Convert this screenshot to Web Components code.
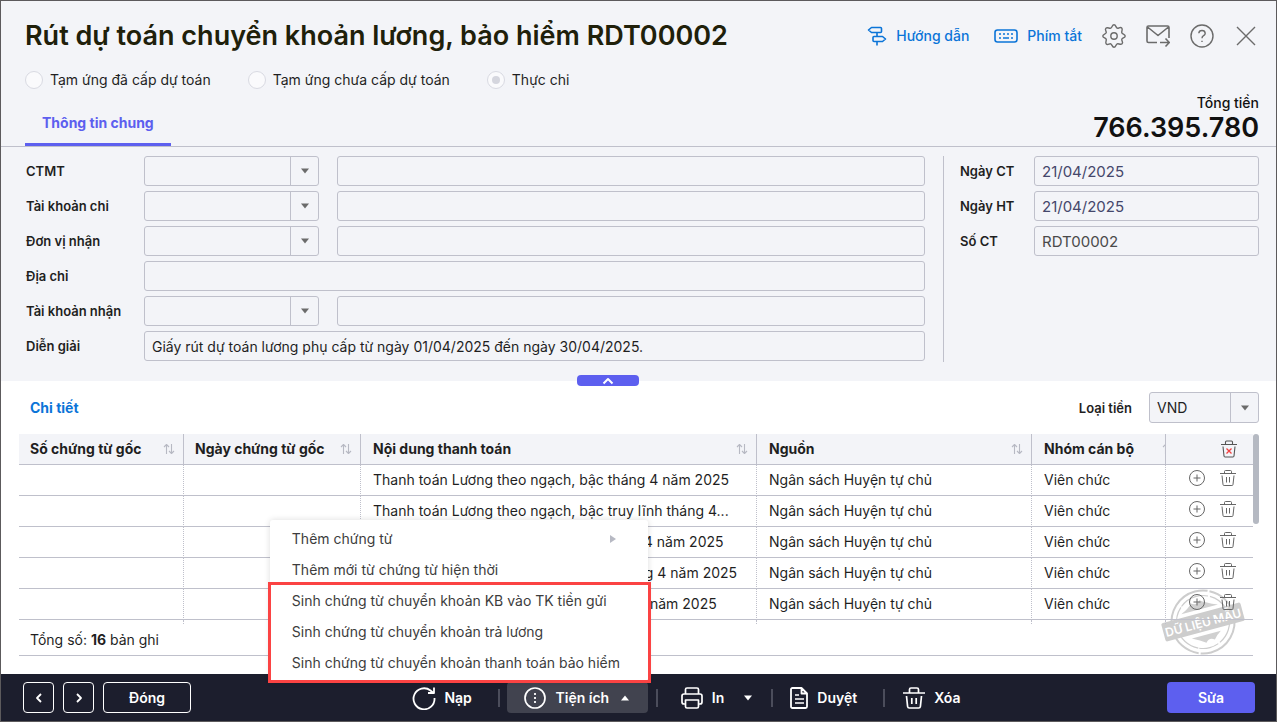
<!DOCTYPE html>
<html lang="vi">
<head>
<meta charset="utf-8">
<meta name="viewport" content="width=device-width, initial-scale=1">
<title>Rút dự toán chuyển khoản lương, bảo hiểm</title>
<style>
  :root {
    --panel: #f3f4f8;
    --line: #bfc0cb;
    --ink: #1f1f1f;
    --primary: #5d5fef;
    --link: #0b74d8;
    --bar: #1c1e2d;
  }
  body { margin: 0; font-family: Inter, "Noto Sans", sans-serif; font-size: 14px; line-height: 20px; color: var(--ink); }
</style>
</head>
<body>
<voucher-page></voucher-page>

<script>
/* Registers an element whose shadow root is cloned from a template. */
const define = (name, css, html) => {
  customElements.define(name, class extends HTMLElement {
    connectedCallback() {
      if (this.shadowRoot) return;
      const tpl = document.createElement('template');
      tpl.innerHTML = '<style>*{box-sizing:border-box}' + css + '</style>' + (typeof html === 'function' ? html(this) : html);
      this.attachShadow({ mode: 'open' }).append(tpl.content.cloneNode(true));
    }
  });
};

const ICONS = {
  signpost: ['0 0 20 20', '<path d="M4.500 1.500H13.500Q14.500 1.500 14.500 2.500V5.500Q14.500 6.500 13.500 6.500H4.500L1.500 4Z M7 10.500H15.500L18.500 13L15.500 15.500H7Q6 15.500 6 14.500V11.500Q6 10.500 7 10.500Z M10 6.500V10.500 M10 15.500V19.500" stroke-width="1.600"/>'],
  keyboard: ['0 0 24 14', '<rect x="1" y="1" width="22" height="12" rx="2.500" stroke-width="1.600"/><path d="M5 5H7M9 5H11M13 5H15M17 5H19M5 9H7M9 9H15M17 9H19" stroke-width="1.600"/>'],
  gear: ['0 0 24 24', '<circle cx="12" cy="12" r="3.200"/><path d="M12 .8C14 .8 13.800 3.600 15.200 4.200S18.200 2.300 19.700 3.900S19.200 7.300 19.800 8.800S23.200 10 23.200 12S20.400 13.800 19.800 15.200S21.700 18.200 20.100 19.700S16.700 19.200 15.200 19.800S14 23.200 12 23.200S10.200 20.400 8.800 19.800S5.800 21.700 4.300 20.100S4.800 16.700 4.200 15.200S.8 14 .8 12S3.600 10.200 4.200 8.800S2.300 5.800 3.900 4.300S7.300 4.800 8.800 4.200S10 .8 12 .8Z"/>'],
  mail: ['0 0 24 24', '<path d="M23 14V3.500Q23 2 21.500 2H2.500Q1 2 1 3.500V17Q1 18.500 2.500 18.500H11M1.500 3L12 11.500L22.500 3M14 18.500H23M19.500 14.500L23.300 18.500L19.500 22.500" stroke-width="1.600"/>'],
  help: ['0 0 24 24', '<circle cx="12" cy="12" r="11"/><path d="M8.800 9.300Q9 6.500 12 6.500T15.200 9.300Q15.200 10.800 13.600 11.700T12 14.300M12 16.800V18"/>'],
  close: ['0 0 20 20', '<path d="M1 1L19 19M19 1L1 19"/>'],
  caret: ['0 0 10 6', '<path d="M1 0.500H9L5 5.500Z" fill="currentColor" stroke="none"/>'],
  caretUp: ['0 0 10 6', '<path d="M1 5.500H9L5 0.500Z" fill="currentColor" stroke="none"/>'],
  caretRight: ['0 0 6 10', '<path d="M0 1V9L6 5Z" fill="currentColor" stroke="none"/>'],
  up: ['0 0 12 8', '<path d="M1.500 6.500L6 2L10.500 6.500" stroke-width="2"/>'],
  sort: ['0 0 12 12', '<path d="M3.500 11V1.500M1 4L3.500 1.500L6 4M8.500 1V10.500M6 8L8.500 10.500L11 8" stroke-width="1.100"/>'],
  plus: ['0 0 16 16', '<circle cx="8" cy="8" r="7.500" stroke-width="1"/><path d="M8 4.500V11.500M4.500 8H11.500" stroke-width="1"/>'],
  trash: ['0 0 16 16', '<path d="M0 3.500H16M4.500 3.500V1.500Q4.500 .5 5.500 .5H10.500Q11.500 .5 11.500 1.500V3.500M2 5.500L3 14.500Q3.100 15.500 4.100 15.500H11.900Q12.900 15.500 13 14.500L14 5.500M6.500 7V12.500M9.500 7V12.500" stroke-width="1"/>'],
  trashAll: ['0 0 16 18', '<path d="M0 4.500H16M4.500 4.500V2Q4.500 1 5.500 1H10.500Q11.500 1 11.500 2V4.500M2 6.500L3 16Q3.100 17 4.100 17H11.900Q12.900 17 13 16L14 6.500" stroke-width="1.100"/><path d="M5.500 8.500L10.500 13.500M10.500 8.500L5.500 13.500" stroke="#f04040" stroke-width="1.300"/>'],
  trashBig: ['0 0 22 22', '<path d="M0 6H22M6.500 6V2.500Q6.500 1 8 1H14Q15.500 1 15.500 2.500V6M3.500 9L4.600 19.500Q4.800 21 6.300 21H15.700Q17.200 21 17.400 19.500L18.500 9M8.800 11V17M13.200 11V17" stroke-width="1.700"/>'],
  reload: ['0 0 24 24', '<path d="M22.500 12A10.500 10.500 0 1 1 18.500 4.500L21.500 7M22 1.500V7H16" stroke-width="1.800"/>'],
  more: ['0 0 22 22', '<circle cx="11" cy="11" r="10" stroke-width="1.700"/><path d="M11 6V8M11 10V12M11 14V16" stroke-width="1.800"/>'],
  print: ['0 0 22 22', '<path d="M4.500 7V2.500Q4.500 1 6 1H16Q17.500 1 17.500 2.500V7M4.500 17H3Q1 17 1 15V9Q1 7 3 7H19Q21 7 21 9V15Q21 17 19 17H17.500M4.500 13H17.500V19.500Q17.500 21 16 21H6Q4.500 21 4.500 19.500Z" stroke-width="1.700"/>'],
  doc: ['0 0 18 22', '<path d="M2.500 1H11.500L17 6.500V19.500Q17 21 15.500 21H2.500Q1 21 1 19.500V2.500Q1 1 2.500 1ZM11.500 1V6.500H17" stroke-width="1.800"/><path d="M5 8H9M5 12H14M5 16H14" stroke-width="1.700"/>'],
  left: ['0 0 16 16', '<path d="M10 4L6 8L10 12" stroke-width="1.800"/>'],
  right: ['0 0 16 16', '<path d="M6 4L10 8L6 12" stroke-width="1.800"/>']
};

/* <ui-icon name>: drawn at the size of its own view box. */
define('ui-icon', ':host{display:inline-flex;flex:none}svg{display:block;fill:none;stroke:currentColor;stroke-width:1.400;stroke-linecap:butt;stroke-linejoin:round}',
  el => {
    const [box, body] = ICONS[el.getAttribute('name')];
    const [, , w, h] = box.split(' ');
    return `<svg viewBox="${box}" width="${w}" height="${h}" aria-hidden="true">${body}</svg>`;
  });

/* Box with a native select and a divided arrow on the right. */
const COMBO_CSS = `
  .combo{display:grid;grid-template-columns:1fr 28px;height:30px;border:1px solid var(--line);border-radius:3px;background:var(--panel)}
  .combo select{grid-area:1/1/2/3;min-width:0;appearance:none;border:0;background:none;padding:0 7px;font:inherit;color:var(--ink);outline:none}
  .combo span{grid-area:1/2;display:flex;align-items:center;justify-content:center;border-left:1px solid var(--line);color:#6b6b6b;pointer-events:none}`;
const INPUT_CSS = `
  input{height:30px;width:100%;min-width:0;border:1px solid var(--line);border-radius:3px;background:transparent;padding:0 7px;font:inherit;color:var(--ink);outline:none}`;

/* <form-row label combo value>: one line of the left form. */
define('form-row', `
  :host{display:grid;grid-template-columns:101px 175px 1fr;column-gap:18px;align-items:center}
  label{font-size:13px;font-weight:600;padding-left:1px;white-space:nowrap}
  .wide{grid-column:2/4}` + COMBO_CSS + INPUT_CSS,
  el => {
    const label = el.getAttribute('label');
    return `<label for="c">${label}</label>` + (el.hasAttribute('combo')
      ? `<div class="combo"><select id="c"><option></option></select><span><ui-icon name="caret"></ui-icon></span></div><input type="text" aria-label="${label} - tên">`
      : `<input id="c" class="wide" type="text" value="${el.getAttribute('value') || ''}">`);
  });

/* <side-row label value>: one line of the right form. */
define('side-row', `
  :host{display:grid;grid-template-columns:74px 1fr;align-items:center}
  label{font-size:13px;font-weight:600}` + INPUT_CSS + `
  input{font-size:15px}
  :host([tone=date]) input{color:#45476b}:host([tone=code]) input{color:#4a4a4a}`,
  el => `<label for="c">${el.getAttribute('label')}</label><input id="c" type="text" value="${el.getAttribute('value')}">`);

define('currency-picker', `
  :host{display:flex;align-items:center;gap:17px}
  label{font-size:13px;font-weight:600}` + COMBO_CSS + `
  .combo{width:110px;height:31px}`,
  `<label for="c">Loại tiền</label><div class="combo"><select id="c"><option>VND</option></select><span><ui-icon name="caret"></ui-icon></span></div>`);

define('voucher-kind', `
  :host{display:flex;gap:37px}
  label{display:flex;align-items:center;gap:7px}
  input{appearance:none;margin:0;width:18px;height:18px;border:1px solid #d9dae2;border-radius:50%;background:#fafafc;display:grid;place-items:center}
  input:checked::after{content:"";width:8px;height:8px;border-radius:50%;background:#d5d6de}`,
  `<label><input type="radio" name="k">Tạm ứng đã cấp dự toán</label>
   <label><input type="radio" name="k">Tạm ứng chưa cấp dự toán</label>
   <label><input type="radio" name="k" checked>Thực chi</label>`);

define('voucher-header', `
  :host{display:block;border-bottom:1px solid var(--line);padding:0 17px 0 24px}
  .top{display:flex;justify-content:space-between;align-items:center;height:69px;padding-top:1px}
  h1{margin:0;font-size:27px;line-height:32px;font-weight:600;color:#20200a}
  .tools{display:flex;align-items:center;gap:20px;margin-right:3px}
  a{display:flex;align-items:center;gap:9px;color:var(--link);font-weight:500;text-decoration:none}
  a:first-child{margin-right:5px}
  button{border:0;background:none;padding:0;display:flex;color:#6b6b6b}
  .tools button:last-child{margin-left:2px}
  .bottom{display:flex;justify-content:space-between;height:76px}
  .left{display:flex;flex-direction:column;justify-content:space-between;align-items:flex-start}
  .tab{border:0;border-bottom:3px solid var(--primary);background:none;padding:0 17px 10px;font:inherit;font-weight:700;color:var(--primary);line-height:20px}
  .total{text-align:right;padding-top:23px;line-height:20px;font-weight:500;color:#111}
  .total b{display:block;font-size:27px;line-height:30px;font-weight:600}`,
  `<div class="top"><h1>Rút dự toán chuyển khoản lương, bảo hiểm RDT00002</h1>
     <nav class="tools">
       <a href="#guide"><ui-icon name="signpost"></ui-icon>Hướng dẫn</a>
       <a href="#keys"><ui-icon name="keyboard"></ui-icon>Phím tắt</a>
       <button aria-label="Thiết lập"><ui-icon name="gear"></ui-icon></button>
       <button aria-label="Gửi"><ui-icon name="mail"></ui-icon></button>
       <button aria-label="Trợ giúp"><ui-icon name="help"></ui-icon></button>
       <button aria-label="Đóng cửa sổ"><ui-icon name="close"></ui-icon></button>
     </nav></div>
   <div class="bottom"><div class="left"><voucher-kind></voucher-kind><button class="tab">Thông tin chung</button></div>
     <div class="total">Tổng tiền<b>766.395.780</b></div></div>`);

define('voucher-form', `
  :host{display:grid;grid-template-columns:1fr 316px;column-gap:18px;padding:9px 17px 19px 24px;position:relative}
  .main,.side{display:flex;flex-direction:column;gap:5px}
  .main{padding-bottom:1px}
  .side{border-left:1px solid var(--line);padding-left:16px}
  .fold{position:absolute;left:calc(50% - 62px);bottom:-5px;width:62px;height:11px;border:0;border-radius:4px;padding:0;background:var(--primary);color:#fff;display:flex;align-items:center;justify-content:center}`,
  `<div class="main">
     <form-row label="CTMT" combo></form-row>
     <form-row label="Tài khoản chi" combo></form-row>
     <form-row label="Đơn vị nhận" combo></form-row>
     <form-row label="Địa chỉ"></form-row>
     <form-row label="Tài khoản nhận" combo></form-row>
     <form-row label="Diễn giải" value="Giấy rút dự toán lương phụ cấp từ ngày 01/04/2025 đến ngày 30/04/2025."></form-row>
   </div>
   <div class="side">
     <side-row label="Ngày CT" value="21/04/2025" tone="date"></side-row>
     <side-row label="Ngày HT" value="21/04/2025" tone="date"></side-row>
     <side-row label="Số CT" value="RDT00002" tone="code"></side-row>
   </div>
   <button class="fold" aria-label="Thu gọn"><ui-icon name="up"></ui-icon></button>`);

const ROWS = [
  'Thanh toán Lương theo ngạch, bậc tháng 4 năm 2025',
  'Thanh toán Lương theo ngạch, bậc truy lĩnh tháng 4...',
  'Thanh toán Phụ cấp trách nhiệm - tháng 4 năm 2025',
  'Thanh toán Phụ cấp thâm niên nghề tháng 4 năm 2025',
  'Thanh toán Phụ cấp công vụ bậc tháng 4 năm 2025'
];

define('detail-table', `
  :host{display:block;position:relative}
  table{position:relative;width:100%;table-layout:fixed;border-collapse:separate;border-spacing:0;text-align:left}
  th,td{height:31px;padding:0 12px;border-bottom:1px solid var(--line);white-space:nowrap;overflow:hidden;text-overflow:ellipsis}
  th{background:var(--panel);font-weight:700;padding-right:8px}
  th:first-child,td:first-child{padding-left:11px}
  th:nth-child(2){padding-left:11px}
  th:not(:last-child){border-right:1px solid var(--line)}
  td:not(:last-child){border-right:1px dotted var(--line)}
  tfoot td{height:4px;border-bottom:0}
  th div{display:flex;justify-content:space-between;align-items:center}
  th ui-icon{color:#b7b9c3}
  .cut{text-overflow:clip}
  .clip{width:130px}
  .acts{display:flex;gap:15px;align-items:center;padding:0 0 4px 11px}
  .all{padding-left:43px}
  button{border:0;background:none;padding:0;display:flex;color:#666}
  th button ui-icon{color:#555}
  .thumb{position:absolute;right:-6px;top:0;width:6px;height:90px;border-radius:3px;background:#b5b9c2}
  .stamp{position:absolute;right:8px;bottom:-1px;width:84px;height:70px}
  .sum{padding:6px 11px 5px;border-bottom:1px solid var(--line);position:relative}`,
  `<svg class="stamp" viewBox="-42 -35 84 70" aria-hidden="true">
     <g transform="rotate(-15)" fill="none" stroke="#cdcdcd">
       <circle r="31.500" stroke-width="2" stroke-dasharray="60 2 38 1"/><circle r="26.500" stroke-width="1.200" stroke-dasharray="30 2 20 1"/>
       <path d="M-19 -13Q-10 -17 -7 -21Q-2 -17 2 -22Q7 -18 19 -13ZM-15 13H15Q10 16 7 20Q2 16 -2 21Q-7 17 -15 13Z" fill="#d0d0d0" stroke="none"/>
       <rect x="-41" y="-9.500" width="82" height="19" rx="2" fill="#cdcdcd" stroke="none"/>
       <text y="5" text-anchor="middle" fill="#fff" stroke="none" font-size="12" font-weight="600">DỮ LIỆU MẪU</text>
     </g></svg>
   <table>
     <colgroup><col style="width:165px"><col style="width:177px"><col><col style="width:275px"><col style="width:134px"><col style="width:87px"></colgroup>
     <thead><tr>
       <th><div>Số chứng từ gốc<ui-icon name="sort"></ui-icon></div></th>
       <th><div>Ngày chứng từ gốc<ui-icon name="sort"></ui-icon></div></th>
       <th><div>Nội dung thanh toán<ui-icon name="sort"></ui-icon></div></th>
       <th><div>Nguồn<ui-icon name="sort"></ui-icon></div></th>
       <th class="cut"><div class="clip">Nhóm cán bộ<ui-icon name="sort"></ui-icon></div></th>
       <th><div class="all"><button aria-label="Xóa tất cả"><ui-icon name="trashAll"></ui-icon></button></div></th>
     </tr></thead>
     <tbody>${ROWS.map(t => `<tr><td></td><td></td><td>${t}</td><td>Ngân sách Huyện tự chủ</td><td>Viên chức</td>
       <td><div class="acts"><button aria-label="Thêm dòng"><ui-icon name="plus"></ui-icon></button><button aria-label="Xóa dòng"><ui-icon name="trash"></ui-icon></button></div></td></tr>`).join('')}</tbody>
     <tfoot><tr><td></td><td></td><td></td><td></td><td></td><td></td></tr></tfoot>
   </table>
   <div class="thumb"></div>
   <div class="sum">Tổng số: <b>16</b> bản ghi</div>`);

define('voucher-detail', `
  :host{display:block;background:#fff;flex:1;padding:0 23px 10px 18px}
  header{display:flex;justify-content:space-between;align-items:center;height:53px;padding-left:11px;margin-right:-6px}
  h2{margin:0;font-size:14px;line-height:20px;font-weight:700;color:var(--link)}`,
  `<header><h2>Chi tiết</h2><currency-picker></currency-picker></header><detail-table></detail-table>`);

/* Pop-up list that opens upward from the tools button. */
define('tools-menu', `
  :host{position:absolute;right:0;bottom:100%;width:378px;background:#fff;border-radius:3px;box-shadow:0 0 6px rgba(0,0,0,.14);color:#3d3d3d;padding:3px 0 4px;font-weight:400}
  ul{list-style:none;margin:0;padding:0}
  a{display:flex;justify-content:space-between;align-items:center;height:31px;padding:0 32px 0 22px;color:inherit;text-decoration:none;white-space:nowrap}
  a ui-icon{color:#b7b9c3}
  .mark{position:absolute;left:-2px;right:-3px;bottom:-1px;height:101px;border:3px solid #fb4343;pointer-events:none}`,
  `<ul>
     <li><a href="#add">Thêm chứng từ<ui-icon name="caretRight"></ui-icon></a></li>
     <li><a href="#copy">Thêm mới từ chứng từ hiện thời</a></li>
     <li><a href="#kb">Sinh chứng từ chuyển khoản KB vào TK tiền gửi</a></li>
     <li><a href="#pay">Sinh chứng từ chuyển khoản trả lương</a></li>
     <li><a href="#ins">Sinh chứng từ chuyển khoản thanh toán bảo hiểm</a></li>
   </ul><div class="mark"></div>`);

define('action-bar', `
  :host{display:flex;justify-content:space-between;align-items:center;background:var(--bar);color:#fff;height:47px;padding:0 21px 0 22px;font-weight:600}
  div{display:flex;align-items:center}
  button{font:inherit;color:inherit;background:none;border:0;height:31px;padding:0;display:flex;align-items:center;justify-content:center;border-radius:4px}
  .nav{gap:9px}
  .nav button{border:1px solid #fff;width:31px}
  .nav .close{width:88px}
  .tools button{gap:9px}
  i{width:2px;height:18px;background:#4b4d5b}
  .tools .reload{gap:8px;padding:0 26px 0 15px}
  .pop{position:relative;margin:0 8px 0 7px}
  .pop button{background:#41434f;padding:0 17px;width:141px}
  .tools .end{margin-left:2px}
  .print{padding:0 18px 0 23px}.print .end{margin-left:10px}
  .tools .approve{padding:0 26px 0 17px}
  .tools .remove{padding:0 0 0 18px}
  .save{background:var(--primary);width:88px}`,
  `<div class="nav"><button aria-label="Trước"><ui-icon name="left"></ui-icon></button><button aria-label="Sau"><ui-icon name="right"></ui-icon></button><button class="close">Đóng</button></div>
   <div class="tools">
     <button class="reload"><ui-icon name="reload"></ui-icon>Nạp</button><i></i>
     <div class="pop"><button><ui-icon name="more"></ui-icon><span>Tiện ích</span><ui-icon class="end" name="caretUp"></ui-icon></button><tools-menu></tools-menu></div><i></i>
     <button class="print"><ui-icon name="print"></ui-icon>In<ui-icon class="end" name="caret"></ui-icon></button><i></i>
     <button class="approve"><ui-icon name="doc"></ui-icon>Duyệt</button><i></i>
     <button class="remove"><ui-icon name="trashBig"></ui-icon>Xóa</button>
   </div>
   <button class="save">Sửa</button>`);

define('voucher-page', `
  :host{display:flex;flex-direction:column;box-sizing:border-box;min-height:100vh;border:1px solid #5c5a5c;background:var(--panel)}
  voucher-form,action-bar{z-index:1}`,
  `<voucher-header></voucher-header><voucher-form></voucher-form><voucher-detail></voucher-detail><action-bar></action-bar>`);
</script>
</body>
</html>
